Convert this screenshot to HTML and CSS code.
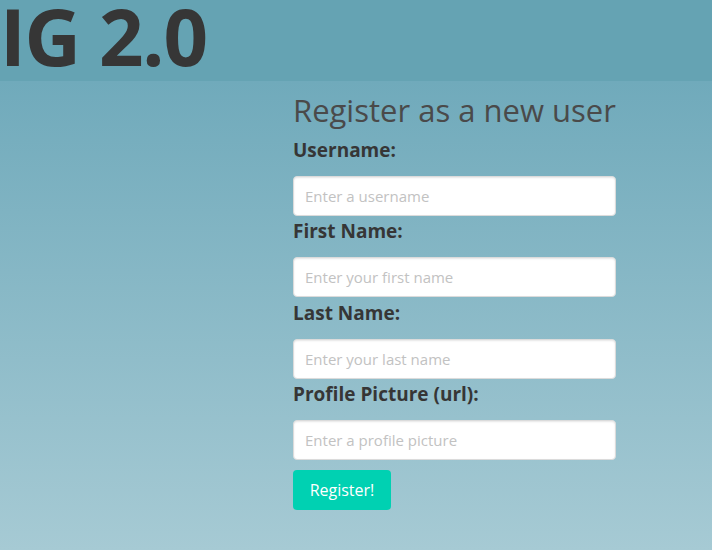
FILE: index.html
```html
<!DOCTYPE html>
<html lang="en">
<head>
<meta charset="utf-8">
<title>IG 2.0 - Register</title>
<link rel="stylesheet" href="styles.css">
</head>
<body>
<header class="hero">
  <h1 class="brand">IG 2.0</h1>
</header>
<main class="main">
  <form class="register">
    <h2 class="title">Register as a new user</h2>
    <div class="field">
      <label class="label" for="username">Username:</label>
      <input class="input" id="username" type="text" placeholder="Enter a username">
    </div>
    <div class="field">
      <label class="label" for="first">First Name:</label>
      <input class="input" id="first" type="text" placeholder="Enter your first name">
    </div>
    <div class="field">
      <label class="label" for="last">Last Name:</label>
      <input class="input" id="last" type="text" placeholder="Enter your last name">
    </div>
    <div class="field">
      <label class="label" for="pic">Profile Picture (url):</label>
      <input class="input" id="pic" type="text" placeholder="Enter a profile picture">
    </div>
    <button class="button" type="button">Register!</button>
  </form>
</main>
</body>
</html>
```
FILE: styles.css
```css
* { box-sizing: border-box; }
html, body { height: 100%; }
body {
  margin: 0;
  font-family: "Open Sans", "Noto Sans", sans-serif;
  background: linear-gradient(to bottom, #70aabb 81px, #a6cad4 100%);
  color: #363636;
  overflow: hidden;
}
.hero {
  height: 81px;
  background: #65a3b3;
}
.brand {
  margin: 0;
  padding-left: 0;
  font-size: 78px;
  font-weight: 700;
  line-height: 72px;
  color: #363636;
  letter-spacing: -1.2px;
  white-space: nowrap;
}
.main {
  padding-left: 293px;
}
.register {
  width: 323px;
  display: flex;
  flex-direction: column;
  padding-top: 11px;
}
.title {
  margin: 0 0 10px;
  font-size: 31px;
  font-weight: 400;
  line-height: 36px;
  color: #4a4a4a;
  white-space: nowrap;
}
.field {
  display: flex;
  flex-direction: column;
}
.label {
  font-size: 19px;
  font-weight: 700;
  line-height: 24px;
  margin-bottom: 14px;
  color: #363636;
  white-space: nowrap;
}
.input {
  height: 40px;
  width: 100%;
  padding: 0 11px;
  border: 1px solid #dbdbdb;
  border-radius: 4px;
  background: #fff;
  box-shadow: inset 0 1px 2px rgba(10,10,10,0.1);
  font-family: inherit;
  font-size: 15px;
  margin-bottom: 3.4px;
}
.input::placeholder { color: #c2c2c2; }
.button {
  margin-top: 6px;
  align-self: flex-start;
  height: 40px;
  width: 98px;
  border: none;
  border-radius: 4px;
  background: #00d1b2;
  color: #fff;
  font-family: inherit;
  font-size: 16px;
  cursor: pointer;
}
```
